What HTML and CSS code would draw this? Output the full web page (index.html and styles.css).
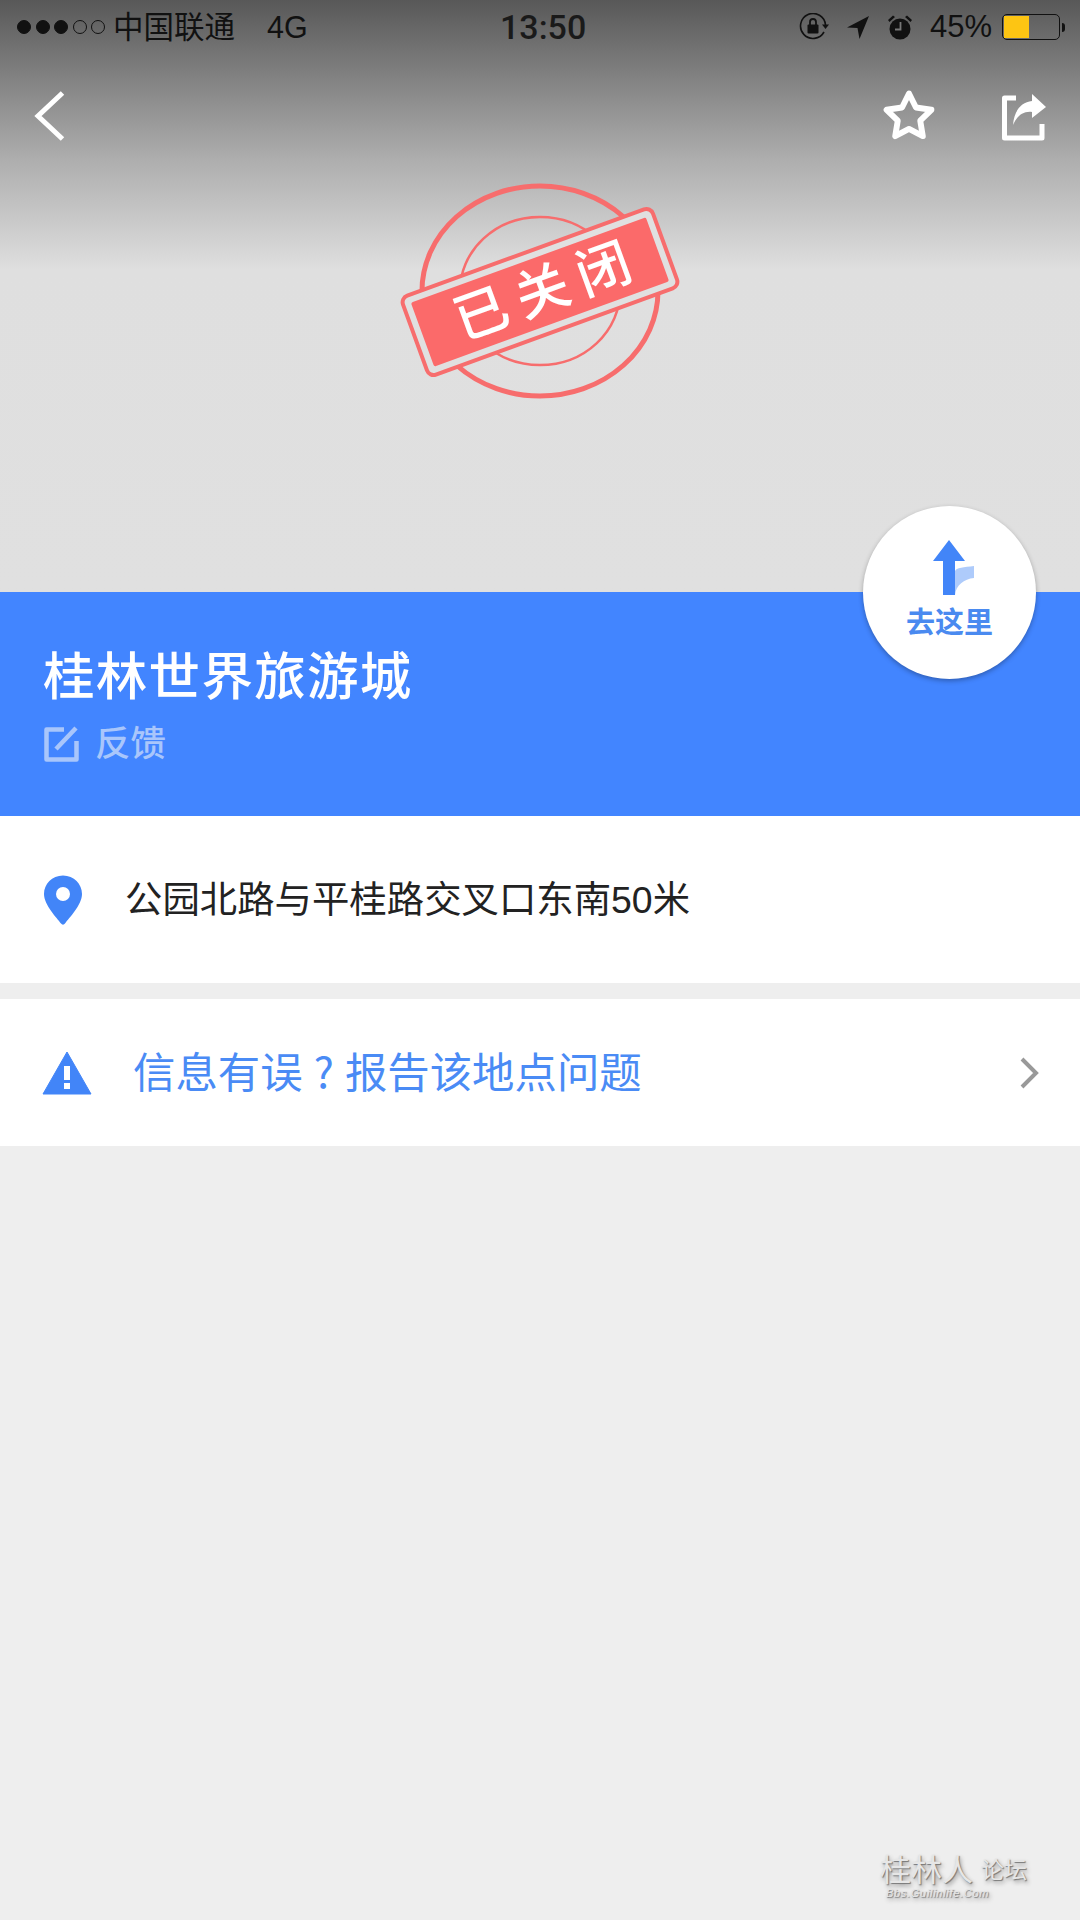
FILE: index.html
```html
<!DOCTYPE html>
<html lang="zh-CN">
<head>
  <meta charset="UTF-8">
  <title>桂林世界旅游城</title>
  <meta name="viewport" content="width=device-width, initial-scale=1.0">
  <link rel="stylesheet" href="styles.css">
</head>
<body>

  <div class="page">

    <!-- Photo area with closed stamp -->
    <div class="hero">
      <div class="status-bar">
        <div class="status-left">
          <div class="signal">
            <span class="dot on"></span><span class="dot on"></span><span class="dot on"></span><span class="dot"></span><span class="dot"></span>
          </div>
          <span class="carrier">中国联通</span>
          <span class="network">4G</span>
        </div>
        <div class="status-time">13:50</div>
        <div class="status-right">
          <svg width="30" height="28" viewBox="0 0 30 28">
            <path d="M25 19 A12.5 12.5 0 1 1 26.5 12" fill="none" stroke="#111" stroke-width="1.6"/>
            <path d="M23 11.5h7l-3.500 4.500z" fill="#111"/>
            <rect x="8.500" y="11.500" width="11" height="9" rx="1" fill="#111"/>
            <path d="M11 12V9a3 3 0 0 1 6 0v3" fill="none" stroke="#111" stroke-width="1.800"/>
          </svg>
          <svg class="ic-loc" width="24" height="24" viewBox="0 0 24 24">
            <path d="M23 1L1 12.500l10.500 0.500L13.500 24z" fill="#111"/>
          </svg>
          <svg class="ic-alarm" width="26" height="26" viewBox="0 0 26 26">
            <circle cx="13" cy="15" r="10.500" fill="#111"/>
            <path d="M1 6l5-4.500 2 1.500-5.500 5zM25 6l-5-4.500-2 1.500 5.500 5z" fill="#111"/>
            <path d="M13.500 8v7.500H8" fill="none" stroke="#777" stroke-width="1.800"/>
          </svg>
          <span class="battery-pct">45%</span>
          <div class="battery"><div class="battery-level"></div></div>
          <div class="battery-nub"></div>
        </div>
      </div>

      <div class="nav-bar">
        <svg width="32" height="50" viewBox="0 0 32 50">
          <path d="M28.500 2L4 25 28.500 48" fill="none" stroke="#fff" stroke-width="5"/>
        </svg>
        <div class="nav-actions">
          <svg width="60" height="60" viewBox="0 0 56 56">
            <path d="M28 7L34.500 20.100 48.900 22.200 38.500 32.400 40.900 46.800 28 40 15.100 46.800 17.500 32.400 7.100 22.200 21.500 20.100z" fill="none" stroke="#fff" stroke-width="5.500" stroke-linejoin="round"/>
          </svg>
          <svg width="48" height="50" viewBox="0 0 48 50">
            <path d="M16 7H4.500V47H42V33" fill="none" stroke="#fff" stroke-width="5" stroke-linejoin="round"/>
            <path d="M32 3L46 16 32 27V21C23 20 17 25 13 34 14 20 21 11 32 10z" fill="#fff"/>
          </svg>
        </div>
      </div>

      <svg class="stamp" width="284" height="230" viewBox="0 0 284 230">
        <ellipse cx="142" cy="115" rx="118" ry="105" fill="none" stroke="#f76d6d" stroke-width="5"/>
        <ellipse cx="142" cy="115" rx="80" ry="74" fill="none" stroke="#f76d6d" stroke-width="2.500"/>
        <g transform="rotate(-20 142 116)">
          <rect x="9" y="74" width="266" height="84" rx="7" fill="#e0e0e0" stroke="#f76d6d" stroke-width="4"/>
          <rect x="17" y="82" width="250" height="68" rx="2" fill="#fb6a6a"/>
          <text x="150" y="135" class="stamp-text" text-anchor="middle">已关闭</text>
        </g>
      </svg>
    </div>

    <!-- Title band -->
    <div class="title-band">
      <h1>桂林世界旅游城</h1>
      <div class="feedback">
        <svg width="36" height="36" viewBox="0 0 36 36">
          <path d="M20 3.500H2.500V33.500H32.500V15" fill="none" stroke="#a9c6fb" stroke-width="4.500" stroke-linejoin="round"/>
          <path d="M12 23L32 2" fill="none" stroke="#a9c6fb" stroke-width="4.500"/>
        </svg>
        <span>反馈</span>
      </div>

      <div class="go-btn">
        <svg width="44" height="58" viewBox="0 -2 44 58">
          <path d="M23 53V29C24 26 32 25 42 24V36C32 37 24 43 23 53z" fill="#aecbfb"/>
          <path d="M17 -2L33 19H23V53H11V19H1z" fill="#4285f8"/>
        </svg>
        <span>去这里</span>
      </div>
    </div>

    <!-- Address -->
    <div class="row address-row">
      <svg width="40" height="50" viewBox="0 0 40 50">
        <path d="M20 0.500C9 0.500 1 9 1 19 1 30 14 43 18 48.500 19 50 21 50 22 48.500 26 43 39 30 39 19 39 9 31 0.500 20 0.500z" fill="#4285f8"/>
        <circle cx="20" cy="19" r="7" fill="#fff"/>
      </svg>
      <span class="address">公园北路与平桂路交叉口东南50米</span>
    </div>

    <!-- Report problem -->
    <div class="row report-row">
      <svg width="50" height="44" viewBox="0 0 50 44">
        <path d="M25 1L49 43H1z" fill="#4285f8" stroke="#4285f8" stroke-width="1" stroke-linejoin="round"/>
        <rect x="22" y="15" width="6" height="14" fill="#fff"/>
        <rect x="22" y="32" width="6" height="6" fill="#fff"/>
      </svg>
      <span class="report">信息有误<span class="report-mark">?</span>报告该地点问题</span>
      <svg width="20" height="32" viewBox="0 0 20 32">
        <path d="M2 2L16 16 2 30" fill="none" stroke="#999" stroke-width="4"/>
      </svg>
    </div>

    <!-- Forum watermark -->
    <div class="watermark">
      <div class="wm-main"><span class="wm-big">桂林人</span><span class="wm-small">论坛</span></div>
      <div class="wm-url">Bbs.Guilinlife.Com</div>
    </div>
  </div>

</body>
</html>
```

FILE: styles.css
```css
/* Base Styles */
body {
  margin: 0;
  font-family: "Liberation Sans", "Noto Sans CJK SC", sans-serif;
  background-color: #eeeeee;
}

.page {
  position: relative;
  width: 1080px;
  height: 1920px;
  overflow: hidden;
  background-color: #eeeeee;
}

/* Hero */
.hero {
  height: 592px;
  background: linear-gradient(180deg, #585858 0, #aeaeae 160px, #dfdfdf 270px, #e0e0e0 592px);
}

.status-bar {
  display: flex;
  justify-content: space-between;
  align-items: center;
  position: relative;
  height: 54px;
  padding: 0 15px 0 17px;
  color: #111;
}

.status-left {
  display: flex;
  align-items: center;
}

.signal {
  display: flex;
  gap: 4.500px;
  margin-right: 8px;
}

.dot {
  width: 14px;
  height: 14px;
  box-sizing: border-box;
  border: 1px solid #111;
  border-radius: 50%;
}

.dot.on {
  background-color: #111;
}

.carrier {
  padding-bottom: 5px;
  font-size: 30.500px;
}

.network {
  margin-left: 32px;
  font-size: 30.500px;
}

.status-time {
  position: absolute;
  left: 500px;
  font-family: Roboto, sans-serif;
  font-size: 34px;
  font-weight: 500;
  color: #1a1a1a;
}

.status-right {
  display: flex;
  align-items: center;
}

.ic-loc {
  margin-left: 17px;
}

.ic-alarm {
  margin-left: 17px;
}

.battery-pct {
  margin-left: 17px;
  font-size: 31px;
}

.battery {
  width: 58px;
  height: 26px;
  margin-left: 10px;
  padding: 1px;
  box-sizing: border-box;
  border: 1px solid #111;
  border-radius: 5px;
}

.battery-level {
  width: 25px;
  height: 100%;
  background-color: #fdc513;
}

.battery-nub {
  width: 3px;
  height: 9px;
  margin-left: 2px;
  background-color: #111;
  border-radius: 0 3px 3px 0;
}

.nav-bar {
  display: flex;
  justify-content: space-between;
  align-items: center;
  height: 56px;
  margin-top: 34px;
  padding: 0 32px 0 34px;
}

.nav-actions {
  display: flex;
  align-items: center;
  gap: 61px;
}

.stamp {
  display: block;
  margin: 32px auto 0;
}

.stamp-text {
  font-family: "Noto Sans CJK SC", sans-serif;
  font-size: 54px;
  font-weight: 500;
  letter-spacing: 11px;
  fill: #fff;
}

/* Title band */
.title-band {
  position: relative;
  height: 224px;
  padding: 0 43px;
  box-sizing: border-box;
  background-color: #4285ff;
  color: #fff;
}

h1 {
  margin: 0;
  padding-top: 45px;
  font-family: "Noto Sans CJK SC", sans-serif;
  font-size: 51.500px;
  font-weight: 500;
  line-height: 72px;
  letter-spacing: 1.300px;
}

.feedback {
  display: flex;
  align-items: center;
  gap: 15px;
  margin-top: 10px;
  padding-left: 1px;
  color: #a9c6fb;
  font-family: "Noto Sans CJK SC", sans-serif;
  font-size: 35.500px;
  font-weight: 500;
  line-height: 44px;
}

.feedback span {
  padding-bottom: 5px;
}

.go-btn {
  display: flex;
  flex-direction: column;
  align-items: center;
  position: absolute;
  top: -86px;
  right: 44px;
  width: 173px;
  height: 173px;
  padding-top: 34px;
  box-sizing: border-box;
  border-radius: 50%;
  background-color: #fff;
  box-shadow: 0 2px 5px rgba(0, 0, 0, 0.3);
  color: #4a8af0;
  font-family: "Noto Sans CJK SC", sans-serif;
  font-size: 29px;
  font-weight: 700;
  line-height: 36px;
}

.go-btn svg {
  margin-left: 8px;
}

.go-btn span {
  margin-top: 4px;
}

/* List rows */
.row {
  display: flex;
  align-items: center;
  background-color: #fff;
}

.address-row {
  height: 167px;
  padding-left: 43px;
}

.address {
  margin-left: 42px;
  padding-bottom: 5px;
  font-size: 37.400px;
  color: #222;
}

.report-row {
  height: 147px;
  margin-top: 16px;
  padding: 0 40px 0 42px;
}

.report {
  flex: 1;
  margin-left: 41px;
  padding-bottom: 6px;
  font-size: 42.400px;
  color: #4a8bf5;
}

.report-mark {
  display: inline-block;
  width: 42.400px;
  font-family: "Noto Sans CJK SC", sans-serif;
  text-align: center;
}

/* Watermark */
.watermark {
  position: absolute;
  right: 53px;
  bottom: 20px;
  color: #e6e6e6;
  text-shadow: 1px 1px 1px #777, 2px 3px 4px #999;
}

.wm-main {
  display: flex;
  align-items: center;
  font-family: "Noto Sans CJK SC", sans-serif;
}

.wm-big {
  font-size: 31px;
  line-height: 36px;
}

.wm-small {
  margin-left: 8px;
  font-size: 23px;
}

.wm-url {
  margin-left: 6px;
  font-size: 11px;
  font-style: italic;
  letter-spacing: 0.700px;
  line-height: 14px;
}
```
